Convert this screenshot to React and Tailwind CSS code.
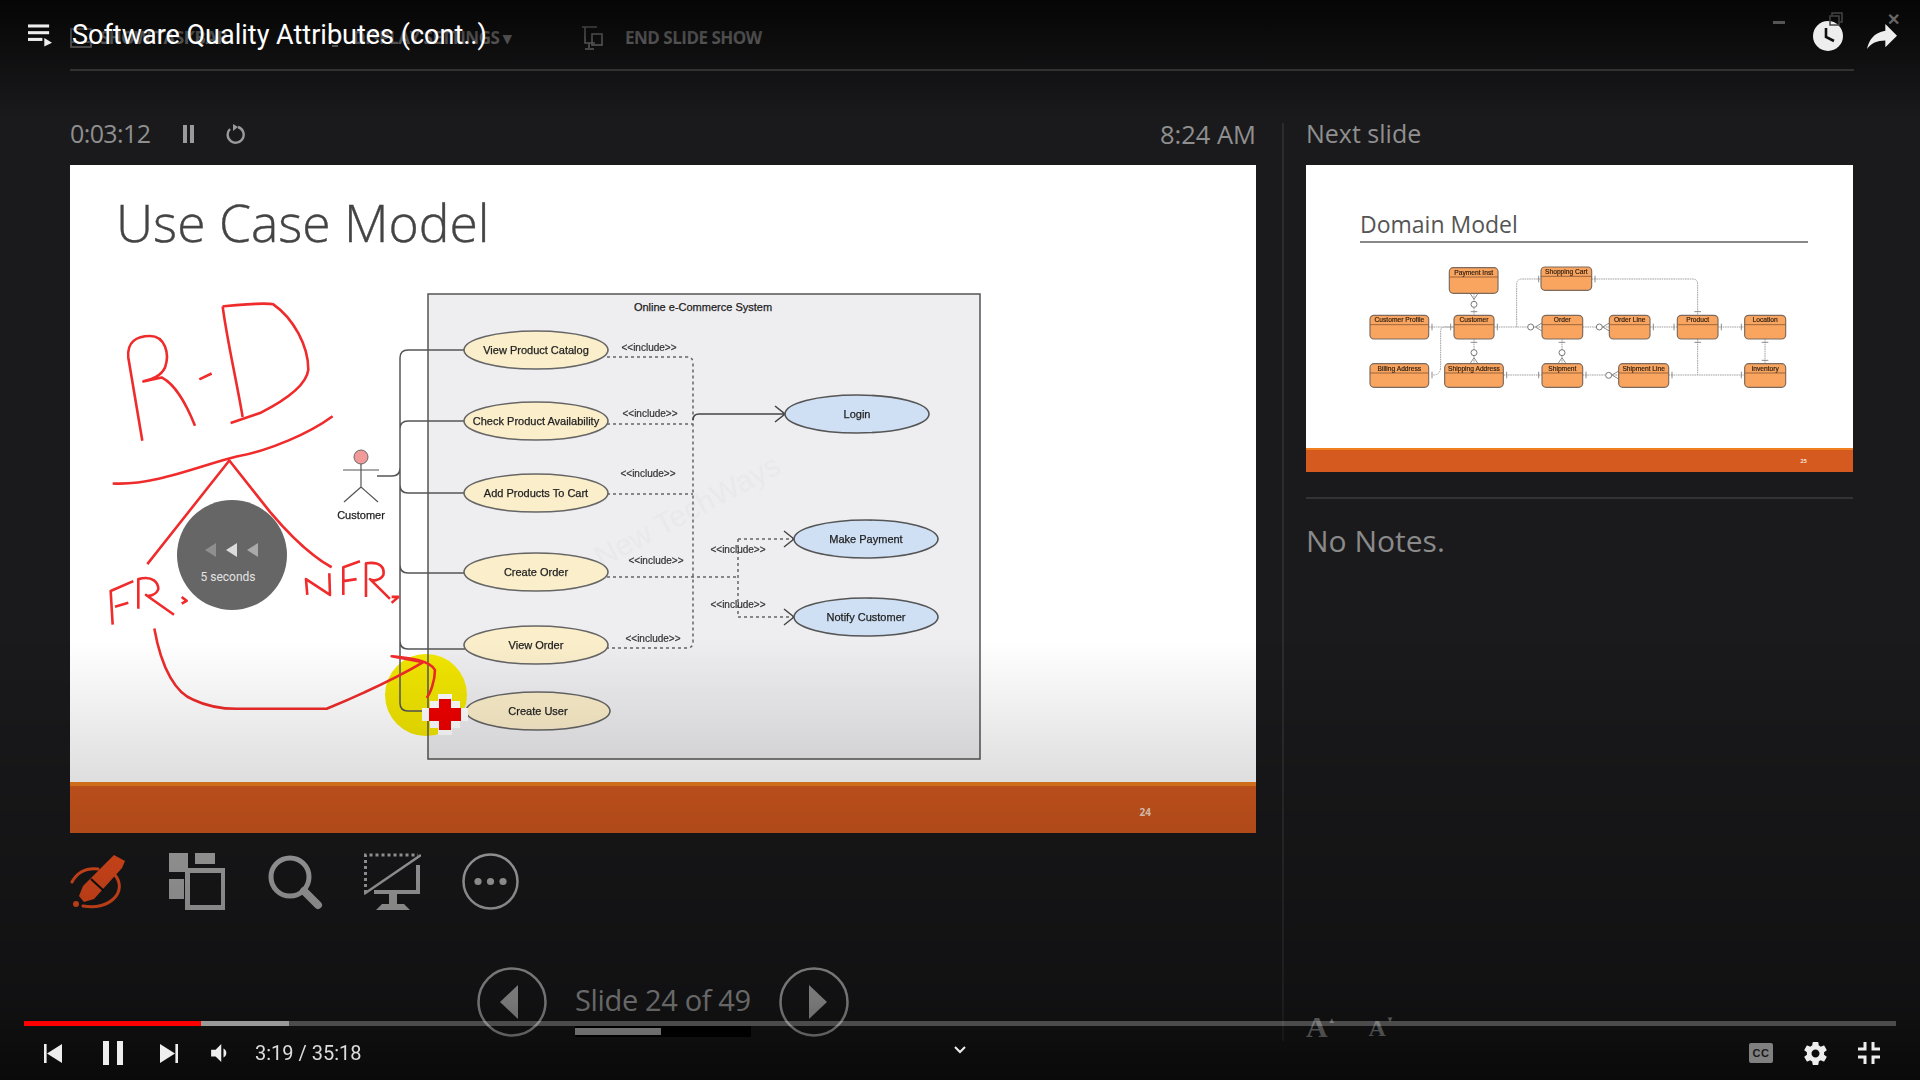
import React from "react";

const USE_CASES = [
  { label: "View Product Catalog", cx: 536, cy: 350 },
  { label: "Check Product Availability", cx: 536, cy: 421 },
  { label: "Add Products To Cart", cx: 536, cy: 493 },
  { label: "Create Order", cx: 536, cy: 572 },
  { label: "View Order", cx: 536, cy: 645 },
  { label: "Create User", cx: 538, cy: 711 },
];

const INCLUDED = [
  { label: "Login", cx: 857, cy: 414 },
  { label: "Make Payment", cx: 866, cy: 539 },
  { label: "Notify Customer", cx: 866, cy: 617 },
];

const INCLUDE_LABELS = [
  [649, 351],
  [650, 417],
  [648, 477],
  [656, 564],
  [653, 642],
  [738, 553],
  [738, 608],
];

const ENTITIES = [
  { label: "Payment Inst", x: 328, y: 50, x2: 474, y2: 127 },
  { label: "Shopping Cart", x: 603, y: 48, x2: 755, y2: 118 },
  { label: "Customer Profile", x: 90, y: 193, x2: 266, y2: 264 },
  { label: "Customer", x: 342, y: 193, x2: 462, y2: 264 },
  { label: "Order", x: 606, y: 193, x2: 728, y2: 264 },
  { label: "Order Line", x: 808, y: 193, x2: 930, y2: 264 },
  { label: "Product", x: 1012, y: 193, x2: 1134, y2: 264 },
  { label: "Location", x: 1214, y: 193, x2: 1337, y2: 264 },
  { label: "Billing Address", x: 90, y: 338, x2: 266, y2: 409 },
  { label: "Shipping Address", x: 314, y: 338, x2: 490, y2: 409 },
  { label: "Shipment", x: 606, y: 338, x2: 728, y2: 409 },
  { label: "Shipment Line", x: 836, y: 338, x2: 986, y2: 409 },
  { label: "Inventory", x: 1214, y: 338, x2: 1337, y2: 409 },
];

const UseCaseDiagram = () => (
  <svg
    viewBox="70 260 1186 522"
    className="block w-[1186px] h-[522px] font-['Liberation_Sans',sans-serif] blur-[0.5px]"
  >
    <rect x="428" y="294" width="552" height="465" fill="#eeeef1" />
    <circle cx="426" cy="695" r="41" fill="#f2e600" />
    <rect x="428" y="294" width="552" height="465" fill="none" stroke="#555" strokeWidth="1.5" />
    <text x="703" y="311" fontSize="11" textAnchor="middle" fill="#222" stroke="#222" strokeWidth="0.25">Online e-Commerce System</text>
    <text x="692" y="520" fontSize="30" textAnchor="middle" fill="#e9e9ec" transform="rotate(-28 692 520)">New TechWays</text>

    {/* actor */}
    <circle cx="361" cy="457" r="7" fill="#f29a9a" stroke="#666" />
    <path d="M361 464V488M343 470H379M361 487L344 502M361 487L378 502" fill="none" stroke="#555" strokeWidth="1.2" />
    <text x="361" y="519" fontSize="11" textAnchor="middle" fill="#222" stroke="#222" strokeWidth="0.25">Customer</text>

    {/* actor associations */}
    <path
      d="M377 476H392Q400 476 400 468V358Q400 350 408 350H465M400 429Q400 421 408 421H465M400 485Q400 493 408 493H465M400 565Q400 573 408 573H465M400 641Q400 649 408 649H465M400 468V703Q400 711 408 711H465"
      fill="none"
      stroke="#555"
      strokeWidth="1.5"
    />

    {/* include lines */}
    <path
      d="M607 357H687Q693 357 693 363V642Q693 648 687 648H607M607 424H693M607 494H693M607 577H738M738 539H794M738 539V617H794"
      fill="none"
      stroke="#666"
      strokeWidth="1.5"
      strokeDasharray="3 3"
    />
    <path d="M693 420Q693 414 699 414H785M775 406L785 414L775 422" fill="none" stroke="#444" strokeWidth="1.6" />
    <path d="M784 531L794 539L784 547M784 609L794 617L784 625" fill="none" stroke="#444" strokeWidth="1.4" />

    {USE_CASES.map((uc) => (
      <g key={uc.label}>
        <ellipse cx={uc.cx} cy={uc.cy} rx="72" ry="19" fill="#fbeecb" stroke="#666" strokeWidth="1.6" />
        <text x={uc.cx} y={uc.cy + 4} fontSize="11" textAnchor="middle" fill="#222" stroke="#222" strokeWidth="0.25">{uc.label}</text>
      </g>
    ))}
    {INCLUDED.map((uc) => (
      <g key={uc.label}>
        <ellipse cx={uc.cx} cy={uc.cy} rx="72" ry="19" fill="#cfe0f5" stroke="#555" strokeWidth="1.6" />
        <text x={uc.cx} y={uc.cy + 4} fontSize="11" textAnchor="middle" fill="#222" stroke="#222" strokeWidth="0.25">{uc.label}</text>
      </g>
    ))}
    {INCLUDE_LABELS.map(([x, y], i) => (
      <text key={i} x={x} y={y} fontSize="10" textAnchor="middle" fill="#333" stroke="#333" strokeWidth="0.2">{"<<include>>"}</text>
    ))}

    {/* hand drawn ink */}
    <g transform="translate(70 160) scale(0.3333 0.3954)" fill="none" stroke="#ef2b2b" strokeWidth="2.6" strokeLinejoin="round">
      <path vectorEffect="non-scaling-stroke" d="M217 710L175 500C170 460 200 445 240 445C285 445 300 490 285 525C270 550 240 555 220 560L275 550C320 570 350 620 375 672" />
      <path vectorEffect="non-scaling-stroke" d="M388 555L425 540" />
      <path vectorEffect="non-scaling-stroke" d="M458 370C520 365 580 360 610 365C670 400 715 470 715 530C710 570 640 610 570 640L482 665M458 370C470 450 500 560 518 650" />
      <path vectorEffect="non-scaling-stroke" d="M128 818C250 825 400 770 500 750C600 735 720 690 788 648" />
      <path vectorEffect="non-scaling-stroke" d="M232 1022L478 760L600 890C660 950 720 1000 785 1030" />
      <path vectorEffect="non-scaling-stroke" d="M128 1175L122 1090L190 1065M135 1130L175 1120M205 1135L205 1060C250 1050 265 1070 265 1085C260 1100 235 1105 228 1100L312 1150M335 1105L350 1115L335 1122" />
      <path vectorEffect="non-scaling-stroke" d="M712 1100L708 1060L780 1100L778 1045M820 1100L820 1030L870 1015M820 1065L860 1060M888 1105L888 1020C930 1015 945 1030 940 1050C930 1065 905 1065 900 1060L960 1110M965 1105L985 1105L965 1120" />
      <path vectorEffect="non-scaling-stroke" d="M253 1185C275 1290 320 1350 370 1365C420 1385 470 1388 500 1388L770 1388C850 1360 960 1320 1060 1270L965 1255C1020 1260 1080 1265 1095 1290C1095 1320 1080 1350 1070 1360" />
    </g>
    <path d="M438 694H452V701H460V708H468V721H460V728H452V735H438V728H430V721H422V708H430V701H438Z" fill="#fff" />
    <path d="M439 699H451V708H461V721H451V730H439V721H429V708H439Z" fill="#ef0000" />
  </svg>
);

const DomainDiagram = () => (
  <svg
    viewBox="0 0 1410 480"
    className="block w-[470px] h-[160px] font-['Liberation_Sans',sans-serif] blur-[0.5px]"
  >
    <path
      d="M266 228H342M280 372Q300 372 302 350V240Q302 228 315 228H342M462 228H606M530 228V100Q530 84 546 84H603M755 84H1058Q1073 84 1073 100V193M402 127V193M402 264V338M666 264V338M728 228H808M930 228H1012M1134 228H1214M1275 264V338M490 372H606M728 372H836M986 372H1214M1073 264V372"
      fill="none"
      stroke="#a5a5a5"
      strokeWidth="3"
      strokeDasharray="5 2"
    />
    {/* crow's feet and ticks */}
    <path
      d="M390 127L402 145L414 127M390 338L402 320L414 338M654 338L666 320L678 338M606 216L586 228L606 240M808 216L788 228L808 240M836 360L816 372L836 384M276 218V238M332 218V238M472 218V238M596 74V94M765 74V94M1063 182H1083M940 218V238M1002 218V238M1144 218V238M1204 218V238M392 182H412M392 274H412M656 274H676M1063 274H1083M1265 274H1285M1265 328H1285M500 362V382M596 362V382M738 362V382M996 362V382M1204 362V382M276 362V382"
      fill="none"
      stroke="#777"
      strokeWidth="2.5"
    />
    {[[402, 160], [402, 305], [666, 305], [572, 228], [778, 228], [806, 373]].map(([cx, cy]) => (
      <circle key={`${cx}-${cy}`} cx={cx} cy={cy} r="9" fill="#fff" stroke="#777" strokeWidth="3" />
    ))}
    {ENTITIES.map((e) => (
      <g key={e.label}>
        <rect x={e.x} y={e.y} width={e.x2 - e.x} height={e.y2 - e.y} rx="12" fill="#f9a560" stroke="#7d6a5c" strokeWidth="3.5" />
        <path d={`M${e.x} ${e.y + 28}H${e.x2}`} stroke="#8a5a36" strokeWidth="2.5" />
        <text x={(e.x + e.x2) / 2} y={e.y + 21} fontSize="20" textAnchor="middle" fill="#2a1c10" stroke="#2a1c10" strokeWidth="0.5">{e.label}</text>
      </g>
    ))}
  </svg>
);

const PenIcon = () => (
  <svg viewBox="0 0 57 57" className="w-[57px] h-[57px]">
    <path d="M2 29C8 18 18 15 28 16M45 22C58 38 40 58 13 53" fill="none" stroke="#f0501f" strokeWidth="3" strokeLinecap="round" />
    <path d="M44 2L55 8L52 15L24 46L14 49L9 43L13 33Z" fill="#f0501f" />
    <path d="M21 26L34 38" stroke="#111" strokeWidth="2" />
    <circle cx="6" cy="51" r="3" fill="#f0501f" />
  </svg>
);

const GridIcon = () => (
  <svg viewBox="0 0 57 57" className="w-[57px] h-[57px]">
    <path d="M1 0H20V19H1ZM27 0H47V11H27V19ZM1 26H16V46H1Z" fill="#b0b0b0" />
    <rect x="19.5" y="17.5" width="36" height="37" fill="none" stroke="#b0b0b0" strokeWidth="5" />
  </svg>
);

const SearchIcon = () => (
  <svg viewBox="0 0 57 57" className="w-[57px] h-[57px]">
    <circle cx="24" cy="24" r="19" fill="none" stroke="#b0b0b0" strokeWidth="5" />
    <path d="M38 38L52 52" stroke="#b0b0b0" strokeWidth="8" strokeLinecap="round" />
  </svg>
);

const ScreenIcon = () => (
  <svg viewBox="0 0 57 57" className="w-[57px] h-[57px]">
    <path d="M1.5 40V2H54" fill="none" stroke="#b0b0b0" strokeWidth="3" strokeDasharray="3 3" />
    <path d="M0 41L57 2" stroke="#b0b0b0" strokeWidth="2.5" />
    <path d="M54 12V39H10" fill="none" stroke="#b0b0b0" strokeWidth="4" />
    <path d="M25 39H33V51H40L46 57H12L18 51H25Z" fill="#b0b0b0" />
  </svg>
);

const MoreIcon = () => (
  <svg viewBox="0 0 57 57" className="w-[57px] h-[57px]">
    <circle cx="28.5" cy="28.5" r="27" fill="none" stroke="#b0b0b0" strokeWidth="2.5" />
    <circle cx="16" cy="28.5" r="3.6" fill="#b0b0b0" />
    <circle cx="28.5" cy="28.5" r="3.6" fill="#b0b0b0" />
    <circle cx="41" cy="28.5" r="3.6" fill="#b0b0b0" />
  </svg>
);

const NavButton = ({ direction }) => (
  <svg viewBox="0 0 70 70" className="w-[70px] h-[70px] shrink-0">
    <circle cx="35" cy="35" r="33.5" fill="none" stroke="#a8a8a8" strokeWidth="2.5" />
    {direction === "prev" ? (
      <path d="M41 18V52L23 35Z" fill="#b0b0b0" />
    ) : (
      <path d="M30 18V52L48 35Z" fill="#b0b0b0" />
    )}
  </svg>
);

const App = () => {
  return (
    <div className="relative h-screen w-full overflow-hidden bg-[#1a1a1c] font-['Open_Sans',sans-serif]">
      {/* powerpoint presenter view */}
      <div className="ml-[70px] mr-[66px] flex h-[71px] items-center border-b-2 border-[#4a4a4c] pt-[6px] text-[17px] font-bold tracking-[-0.5px] text-[#a8a8a8]">
        <svg viewBox="0 0 22 20" className="h-[20px] w-[22px] shrink-0" fill="none" stroke="#a8a8a8" strokeWidth="1.6">
          <rect x="1" y="1" width="20" height="18" />
          <path d="M1 14H21" />
        </svg>
        <span className="ml-[8px] w-[135px] whitespace-nowrap">SHOW TASKBAR</span>
        <svg viewBox="0 0 20 20" className="ml-[90px] h-[20px] w-[20px] shrink-0" fill="none" stroke="#a8a8a8" strokeWidth="2">
          <circle cx="10" cy="9" r="6" />
          <path d="M7 18H13" />
        </svg>
        <span className="ml-[8px] w-[172px] whitespace-nowrap">DISPLAY SETTINGS ▾</span>
        <svg viewBox="0 0 24 24" className="ml-[56px] h-[24px] w-[24px] shrink-0" fill="none" stroke="#a8a8a8" strokeWidth="1.6">
          <path d="M1 1H16M4 1V17H14M8 17V22M4 23H13" />
          <rect x="11" y="8" width="10" height="11" />
        </svg>
        <span className="ml-[20px] whitespace-nowrap">END SLIDE SHOW</span>
      </div>

      <div className="flex px-[70px]">
        <div className="w-[1186px] shrink-0">
          <div className="flex h-[94px] items-center justify-between pt-[32px] text-[25px] text-[#8f8f8f]">
            <div className="flex items-center">
              <span className="tracking-[-0.6px]">0:03:12</span>
              <svg viewBox="0 0 14 18" className="ml-[32px] h-[18px] w-[14px]" fill="#9a9a9a">
                <rect x="1" width="4" height="18" />
                <rect x="8" width="4" height="18" />
              </svg>
              <svg viewBox="0 0 20 20" className="ml-[29px] h-[20px] w-[20px]" fill="none" stroke="#9a9a9a" strokeWidth="2.4">
                <path d="M5 5A8 8 0 1 0 13 3" />
                <path d="M8 0V7L13 3Z" fill="#9a9a9a" stroke="none" />
              </svg>
            </div>
            <span className="text-[25.5px]">8:24 AM</span>
          </div>

          <div className="flex h-[668px] flex-col bg-white">
            <div className="h-[95px] pl-[46px] pt-[27px] text-[51.6px] font-light leading-[60px] text-[#444] [-webkit-text-stroke:0.4px_#444]">
              Use Case Model
            </div>
            <UseCaseDiagram />
            <div className="flex h-[51px] justify-end border-t-[4px] border-[#ef7f1f] bg-[#d55a1f] pr-[105px] pt-[20px] text-[10px] font-bold leading-[12px] text-[#f5dcc8]">
              24
            </div>
          </div>

          <div className="mt-[20px] flex gap-[41px]">
            <PenIcon />
            <GridIcon />
            <SearchIcon />
            <ScreenIcon />
            <MoreIcon />
          </div>

          <div className="ml-[407px] mt-[57px] flex gap-[28px]">
            <NavButton direction="prev" />
            <div className="flex w-[176px] shrink-0 flex-col">
              <span className="h-[59px] whitespace-nowrap text-[29px] leading-[66px] tracking-[-0.35px] text-[#9a9a9a]">
                Slide 24 of 49
              </span>
              <div className="h-[11px] bg-black py-[2px]">
                <div className="h-full w-[86px] bg-[#c0c0c0]" />
              </div>
            </div>
            <NavButton direction="next" />
          </div>
        </div>

        <div className="ml-[26px] mt-[52px] h-[918px] w-[2px] shrink-0 bg-[#2c2c2e]" />

        <div className="ml-[22px] w-[547px] shrink-0">
          <div className="flex h-[94px] items-center pt-[32px] text-[25px] text-[#8f8f8f]">Next slide</div>
          <div className="flex h-[307px] flex-col bg-white">
            <div className="ml-[54px] mr-[45px] h-[78px] border-b-2 border-[#888] pt-[41px] text-[23px] leading-[36px] text-[#555]">
              Domain Model
            </div>
            <div className="ml-[34px] mt-[8px]">
              <DomainDiagram />
            </div>
            <div className="mt-auto flex h-[24px] justify-end border-t-[2px] border-[#ef7f1f] bg-[#d55a1f] pr-[46px] pt-[7px] text-[6px] font-bold leading-[8px] text-[#f5dcc8]">
              25
            </div>
          </div>
          <div className="mt-[25px] border-t-2 border-[#333335] pt-[22px] text-[30px] leading-[40px] text-[#8a8a8a]">
            No Notes.
          </div>
        </div>
      </div>

      <div className="absolute left-[1306px] top-[1012px] flex items-end font-['Liberation_Serif',serif] font-bold text-[#888]">
        <span className="text-[30px] leading-[30px]">A</span>
        <span className="mb-[17px] text-[8px] leading-[8px]">▲</span>
        <span className="ml-[33px] text-[24px] leading-[27px]">A</span>
        <span className="mb-[18px] text-[8px] leading-[8px]">▼</span>
      </div>

      {/* seek overlay */}
      <div className="absolute left-[177px] top-[500px] flex h-[110px] w-[110px] flex-col items-center rounded-full bg-[#666] pt-[43px]">
        <div className="ml-[-2px] flex gap-[10px]">
          <svg viewBox="0 0 11 14" className="h-[14px] w-[11px]"><path d="M11 0V14L0 7Z" fill="#8f8f8f" /></svg>
          <svg viewBox="0 0 11 14" className="h-[14px] w-[11px]"><path d="M11 0V14L0 7Z" fill="#dcdcdc" /></svg>
          <svg viewBox="0 0 11 14" className="h-[14px] w-[11px]"><path d="M11 0V14L0 7Z" fill="#aaaaaa" /></svg>
        </div>
        <span className="ml-[-8px] mt-[12px] font-[Roboto,sans-serif] text-[12px] leading-[16px] text-[#e4e4e4]">5 seconds</span>
      </div>

      {/* youtube chrome */}
      <div className="pointer-events-none absolute inset-x-0 top-0 h-[120px] bg-gradient-to-b from-black/80 to-transparent" />
      <div className="pointer-events-none absolute inset-x-0 bottom-0 h-[440px] bg-[linear-gradient(to_bottom,rgba(0,0,0,0)_0%,rgba(0,0,0,0.13)_32%,rgba(0,0,0,0.32)_82%,rgba(0,0,0,0.6)_100%)]" />

      <div className="absolute inset-x-0 top-0 flex h-[70px] items-start justify-between pl-[28px] pr-[23px]">
        <div className="flex items-center pt-[19px] font-[Roboto,sans-serif]">
          <svg viewBox="0 0 25 24" className="h-[24px] w-[24px]" fill="#eeeeee">
            <rect y="1" width="22" height="3.2" />
            <rect y="8" width="22" height="3.2" />
            <rect y="15" width="15" height="3.2" />
            <path d="M17 15L25 20L17 24Z" />
          </svg>
          <span className="ml-[20px] whitespace-nowrap text-[27px] leading-[32px] text-white">
            Software Quality Attributes (cont..)
          </span>
        </div>
        <div className="relative flex items-center gap-[24px] pt-[21px]">
          <svg viewBox="0 0 30 30" className="h-[30px] w-[30px]">
            <circle cx="15" cy="15" r="15" fill="#eeeeee" />
            <path d="M13 7V16L21 20" fill="none" stroke="#111" strokeWidth="2.6" />
          </svg>
          <svg viewBox="3 5 18 15" className="h-[25px] w-[30px]" preserveAspectRatio="none" fill="#eeeeee">
            <path d="M14 9V5l7 7-7 7v-4.1c-5 0-8.5 1.6-11 5.1 1-5 4-10 11-11z" />
          </svg>
        </div>
      </div>

      <div className="absolute inset-x-0 bottom-0 h-[59px] px-[24px]">
        <div className="flex h-[5px] bg-[#ffffff]/25">
          <div className="w-[177px] bg-[#ff0000]" />
          <div className="w-[88px] bg-[#999999]" />
        </div>
        <div className="mt-[15px] flex items-center text-[#eeeeee]">
          <svg viewBox="0 0 18 19" className="ml-[20px] h-[19px] w-[18px]" fill="#eeeeee">
            <rect width="2.6" height="19" />
            <path d="M18 0V19L3 9.5Z" />
          </svg>
          <svg viewBox="0 0 20 24" className="ml-[41px] h-[24px] w-[20px]" fill="#eeeeee">
            <rect width="6" height="24" />
            <rect x="14" width="6" height="24" />
          </svg>
          <svg viewBox="0 0 18 19" className="ml-[37px] h-[19px] w-[18px]" fill="#eeeeee">
            <path d="M0 0V19L15 9.5Z" />
            <rect x="15.4" width="2.6" height="19" />
          </svg>
          <svg viewBox="3 4 14 16" className="ml-[33px] h-[18px] w-[16px]" fill="#eeeeee">
            <path d="M3 9v6h4l5 5V4L7 9H3z" />
            <path d="M14 8v8c1.5-.7 2.5-2.2 2.5-4s-1-3.3-2.5-4z" />
          </svg>
          <span className="ml-[28px] font-[Roboto,sans-serif] text-[20px] leading-[24px] text-[#dddddd]">3:19 / 35:18</span>
          <svg viewBox="0 0 12 8" className="ml-[592px] mb-[6px] h-[8px] w-[12px]" fill="none" stroke="#eeeeee" strokeWidth="2">
            <path d="M1 1L6 6L11 1" />
          </svg>
          <div className="ml-auto mr-[16px] flex items-center gap-[31px]">
            <div className="flex h-[20px] w-[24px] items-center justify-center rounded-[2px] bg-[#808080] font-['Liberation_Sans',sans-serif] text-[11px] font-bold leading-[12px] tracking-[0.5px] text-[#1a1a1a]">
              CC
            </div>
            <svg viewBox="2 2 20 20" className="h-[23px] w-[23px]" fill="#eeeeee">
              <path
                fillRule="evenodd"
                d="M19.43 12.98c.04-.32.07-.64.07-.98s-.03-.66-.07-.98l2.11-1.65c.19-.15.24-.42.12-.64l-2-3.46c-.12-.22-.39-.3-.61-.22l-2.49 1c-.52-.4-1.08-.73-1.69-.98l-.38-2.65C14.46 2.18 14.25 2 14 2h-4c-.25 0-.46.18-.49.42l-.38 2.65c-.61.25-1.17.59-1.69.98l-2.49-1c-.23-.09-.49 0-.61.22l-2 3.46c-.13.22-.07.49.12.64l2.11 1.65c-.04.32-.07.65-.07.98s.03.66.07.98l-2.11 1.65c-.19.15-.24.42-.12.64l2 3.46c.12.22.39.3.61.22l2.49-1c.52.4 1.08.73 1.69.98l.38 2.65c.03.24.24.42.49.42h4c.25 0 .46-.18.49-.42l.38-2.65c.61-.25 1.17-.59 1.69-.98l2.49 1c.23.09.49 0 .61-.22l2-3.46c.12-.22.07-.49-.12-.64l-2.11-1.65zM12 15.5c-1.93 0-3.5-1.57-3.5-3.5s1.57-3.5 3.5-3.5 3.5 1.57 3.5 3.5-1.57 3.5-3.5 3.5z"
              />
            </svg>
            <svg viewBox="0 0 22 22" className="h-[22px] w-[22px]" fill="none" stroke="#eeeeee" strokeWidth="3">
              <path d="M0 7H7V0M15 0V7H22M22 15H15V22M7 22V15H0" />
            </svg>
          </div>
        </div>
      </div>

      {/* window buttons showing through from the shared screen */}
      <div className="absolute right-[20px] top-[12px] flex items-start gap-[44px] text-[#666]">
        <div className="mt-[9px] h-[3px] w-[12px] bg-[#555]" />
        <svg viewBox="0 0 14 14" className="h-[14px] w-[14px]" fill="none" stroke="#444" strokeWidth="1.5">
          <path d="M3 3V1H13V10H11M1 4H10V13H1Z" />
        </svg>
        <span className="text-[16px] font-bold leading-[14px]">✕</span>
      </div>
    </div>
  );
};

export default App;
